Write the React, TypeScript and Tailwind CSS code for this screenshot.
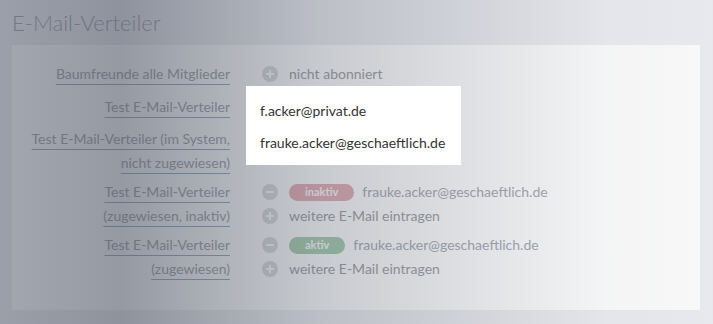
import React from "react";

type Row = {
  label: string[];
  values: React.ReactNode[];
  className: string;
};

const CircleIcon = ({ kind }: { kind: "plus" | "minus" }) => (
  <svg className="w-4 h-4 shrink-0" viewBox="0 0 16 16">
    <circle cx="8" cy="8" r="8" fill="#dcdde0" />
    <path d="M4.8 8h6.4" stroke="#fff" strokeWidth={2} strokeLinecap="round" />
    {kind === "plus" && <path d="M8 4.8v6.4" stroke="#fff" strokeWidth={2} strokeLinecap="round" />}
  </svg>
);

const Badge = ({ text, tone }: { text: string; tone: "red" | "green" }) => (
  <span
    className={`inline-flex items-center justify-center h-[17px] rounded-full px-4 text-[11px] font-bold text-white ${
      tone === "red" ? "bg-[#e6b0b7]" : "bg-[#a9cfb1]"
    }`}
  >
    {text}
  </span>
);

const Value = ({ icon, children }: { icon: "plus" | "minus"; children: React.ReactNode }) => (
  <div className="flex items-center h-6">
    <CircleIcon kind={icon} />
    <div className="ml-[11px] flex items-center gap-2">{children}</div>
  </div>
);

export default function App() {
  const rows: Row[] = [
    {
      label: ["Baumfreunde alle Mitglieder"],
      values: [<Value icon="plus" key="a">nicht abonniert</Value>],
      className: "mt-4",
    },
    { label: ["Test E-Mail-Verteiler"], values: [], className: "mt-[9px]" },
    { label: ["Test E-Mail-Verteiler (im System,", "nicht zugewiesen)"], values: [], className: "mt-2" },
    {
      label: ["Test E-Mail-Verteiler", "(zugewiesen, inaktiv)"],
      values: [
        <Value icon="minus" key="a">
          <Badge text="inaktiv" tone="red" />
          <span className="text-[#a7abb5]">frauke.acker@geschaeftlich.de</span>
        </Value>,
        <Value icon="plus" key="b">weitere E-Mail eintragen</Value>,
      ],
      className: "mt-[5px]",
    },
    {
      label: ["Test E-Mail-Verteiler", "(zugewiesen)"],
      values: [
        <Value icon="minus" key="a">
          <Badge text="aktiv" tone="green" />
          <span className="text-[#a7abb5]">frauke.acker@geschaeftlich.de</span>
        </Value>,
        <Value icon="plus" key="b">weitere E-Mail eintragen</Value>,
      ],
      className: "mt-[5px]",
    },
  ];

  return (
    <div className="relative w-[713px] h-[324px] overflow-hidden bg-[#eeeff3] font-['Lato',sans-serif]">
      {/* Page */}
      <div className="px-3 pt-[9px]">
        <h1 className="text-[22px] leading-[28px] font-light text-[#9fa2a9]">E-Mail-Verteiler</h1>
        <div className="mt-2 w-[688px] h-[265px] bg-white pt-px">
          {rows.map((row, i) => (
            <div key={i} className={`flex ${row.className}`}>
              <div className="w-[218px] text-right text-[14px] leading-6 text-[#a2a4a9]">
                {row.label.map((l) => (
                  <div key={l}>
                    <span className="underline decoration-[#93adc0] underline-offset-[5px]">{l}</span>
                  </div>
                ))}
              </div>
              <div className="ml-[32px] text-[14px] leading-6 text-[#9fa0a4]">{row.values}</div>
            </div>
          ))}
        </div>
      </div>

      {/* Dim overlay */}
      <div className="absolute inset-0 bg-[linear-gradient(to_right,rgba(72,80,96,0.5)_0%,rgba(72,80,96,0.58)_17%,rgba(72,80,96,0.3)_45%,rgba(72,80,96,0.06)_85%,rgba(72,80,96,0.04)_100%)]" />

      {/* Popup */}
      <div className="absolute left-[246px] top-[86px] w-[215px] h-[79px] bg-white px-[14px] pt-[12px] text-[14px] text-[#333]">
        <div className="leading-[26px]">f.acker@privat.de</div>
        <div className="mt-[6px] leading-[26px]">frauke.acker@geschaeftlich.de</div>
      </div>
    </div>
  );
}
